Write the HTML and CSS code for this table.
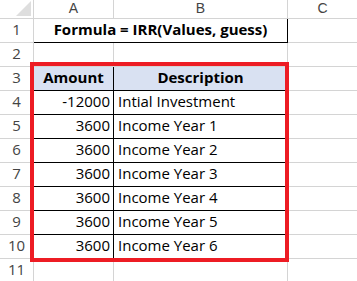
FILE: index.html
```html
<!DOCTYPE html>
<html>
<head>
<meta charset="utf-8">
<link rel="stylesheet" href="styles.css">
</head>
<body>
<div class="sheet">
  <div class="corner"><svg class="tri" width="17" height="16" viewBox="0 0 17 16"><polygon points="16,0 16,15 1,15" fill="#dedede"/></svg></div>
  <div class="ch">A</div><div class="ch">B</div><div class="ch last">C</div>

  <div class="rh">1</div><div class="cell formula">Formula = IRR(Values, guess)</div><div class="cell last"></div>
  <div class="rh">2</div><div class="cell"></div><div class="cell"></div><div class="cell last"></div>
  <div class="rh">3</div><div class="cell tb th">Amount</div><div class="cell tb th">Description</div><div class="cell last"></div>
  <div class="rh">4</div><div class="cell tb num">-12000</div><div class="cell tb txt">Intial Investment</div><div class="cell last"></div>
  <div class="rh">5</div><div class="cell tb num">3600</div><div class="cell tb txt">Income Year 1</div><div class="cell last"></div>
  <div class="rh">6</div><div class="cell tb num">3600</div><div class="cell tb txt">Income Year 2</div><div class="cell last"></div>
  <div class="rh">7</div><div class="cell tb num">3600</div><div class="cell tb txt">Income Year 3</div><div class="cell last"></div>
  <div class="rh">8</div><div class="cell tb num">3600</div><div class="cell tb txt">Income Year 4</div><div class="cell last"></div>
  <div class="rh">9</div><div class="cell tb num">3600</div><div class="cell tb txt">Income Year 5</div><div class="cell last"></div>
  <div class="rh">10</div><div class="cell tb num">3600</div><div class="cell tb txt">Income Year 6</div><div class="cell last"></div>
  <div class="rh">11</div><div class="cell"></div><div class="cell"></div><div class="cell last"></div>

  <div class="redbox"></div>
</div>
</body>
</html>
```
FILE: styles.css
```css
html, body {
  margin: 0;
  padding: 0;
  background: #ffffff;
}
.sheet {
  position: relative;
  display: grid;
  grid-template-columns: 34px 80px 174px 1fr;
  grid-template-rows: 19px repeat(11, 24px);
  width: 357px;
  height: 281px;
  overflow: hidden;
  font-family: "Open Sans", "Liberation Sans", sans-serif;
  font-size: 15px;
  color: #000;
}
.sheet > div {
  box-sizing: border-box;
}
.corner {
  border-right: 1px solid #d4d4d4;
  border-bottom: 1px solid #d4d4d4;
  display: flex;
  justify-content: flex-end;
  align-items: flex-end;
}
.tri {
  display: block;
  margin: 0 1px 1px 0;
}
.ch {
  border-right: 1px solid #d4d4d4;
  border-bottom: 1px solid #d4d4d4;
  color: #444;
  font-family: "Liberation Sans", Arial, sans-serif;
  font-size: 14px;
  display: flex;
  justify-content: center;
  align-items: flex-end;
  padding-bottom: 3px;
  line-height: 14px;
}
.rh {
  border-right: 1px solid #d4d4d4;
  border-bottom: 1px solid #d4d4d4;
  color: #444;
  display: flex;
  justify-content: center;
  align-items: flex-end;
  padding-bottom: 5px;
  line-height: 15px;
}
.cell {
  border-right: 1px solid #d4d4d4;
  border-bottom: 1px solid #d4d4d4;
  display: flex;
  align-items: flex-end;
  padding: 0 4px 5px 4px;
  line-height: 15px;
  white-space: nowrap;
}
.last {
  border-right: none;
}
.formula {
  grid-column: span 2;
  justify-content: center;
  font-weight: bold;
  border-right: 1px solid #000;
  border-bottom: 1px solid #000;
}
.tb {
  border-right: 1px solid #000;
  border-bottom: 1px solid #000;
}
.th {
  background: #d9e1f2;
  font-weight: bold;
  justify-content: center;
}
.num {
  justify-content: flex-end;
  padding-right: 3px;
}
.txt {
  justify-content: flex-start;
  padding-left: 4px;
}
.redbox {
  position: absolute;
  left: 30px;
  top: 62px;
  width: 259px;
  height: 200px;
  border: 4px solid #ed1c24;
  box-sizing: border-box;
}
```
